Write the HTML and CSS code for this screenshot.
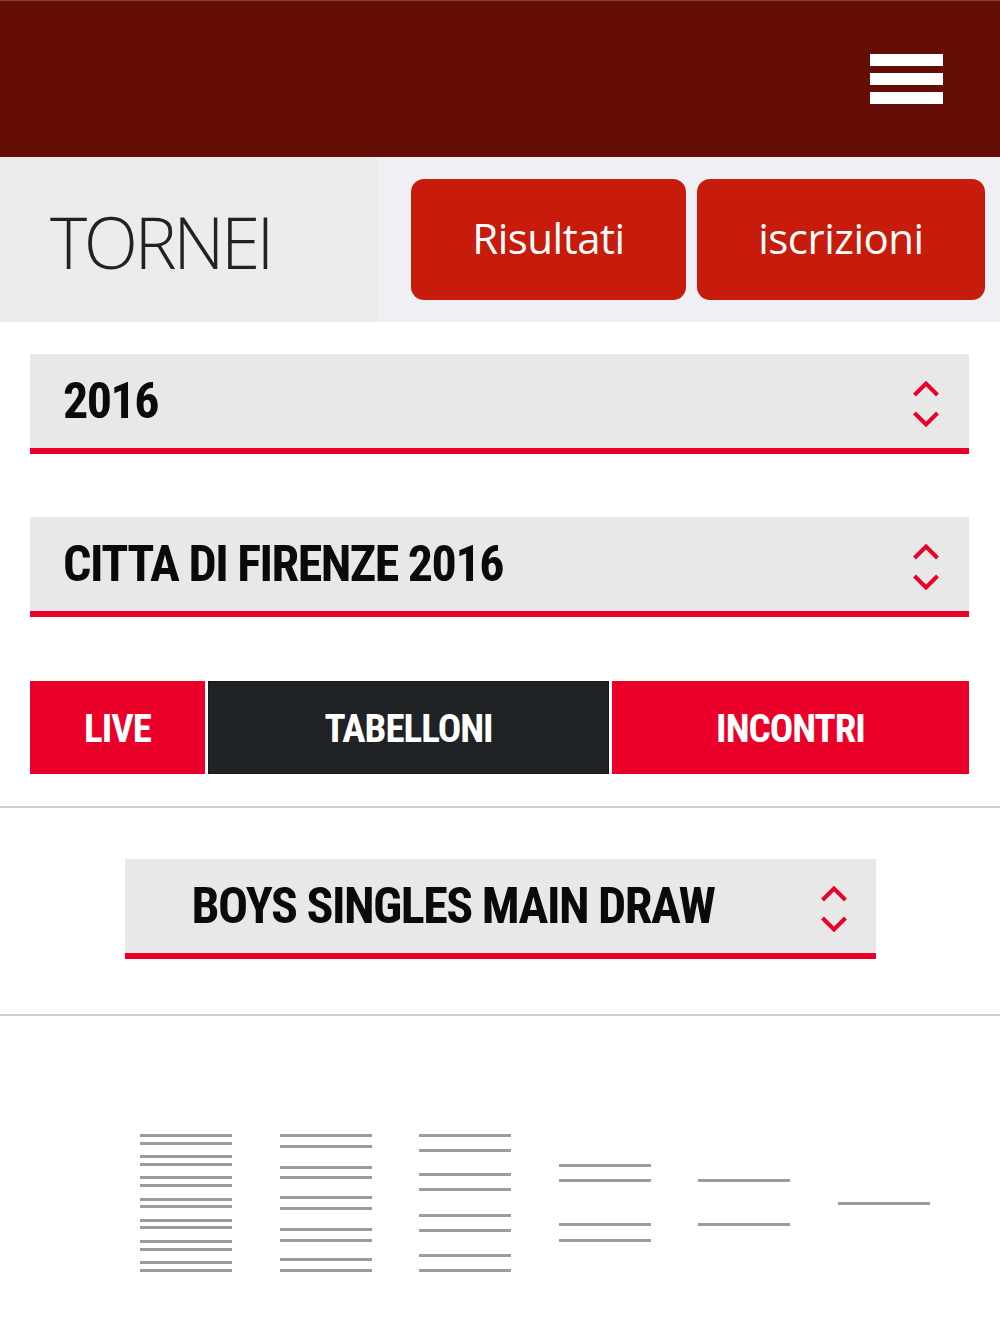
FILE: index.html
```html
<!DOCTYPE html>
<html lang="it">
  <head>
    <meta charset="UTF-8" />
    <meta name="viewport" content="width=device-width, initial-scale=1.0" />
    <title>Tornei</title>
    <link rel="stylesheet" href="styles.css">
  </head>
  <body>
    <header class="topbar">
      <button class="menu-btn" aria-label="Menu">
        <span></span>
        <span></span>
        <span></span>
      </button>
    </header>

    <section class="page-title">
      <div class="title-box">
        <h1>TORNEI</h1>
      </div>
      <div class="title-actions">
        <a href="#" class="action-btn">Risultati</a>
        <a href="#" class="action-btn">iscrizioni</a>
      </div>
    </section>

    <section class="filters">
      <div class="select">
        <span class="select-label">2016</span>
        <svg class="select-arrows" viewBox="0 0 28 48" width="28" height="48">
          <path d="M2.5 15 L14 3.5 L25.5 15" />
          <path d="M2.5 33 L14 44.5 L25.5 33" />
        </svg>
      </div>
      <div class="select">
        <span class="select-label">CITTA DI FIRENZE 2016</span>
        <svg class="select-arrows" viewBox="0 0 28 48" width="28" height="48">
          <path d="M2.5 15 L14 3.5 L25.5 15" />
          <path d="M2.5 33 L14 44.5 L25.5 33" />
        </svg>
      </div>
      <nav class="tabs">
        <a href="#" class="tab">LIVE</a>
        <a href="#" class="tab active">TABELLONI</a>
        <a href="#" class="tab">INCONTRI</a>
      </nav>
    </section>

    <section class="draw-picker">
      <div class="select select-draw">
        <span class="select-label">BOYS SINGLES MAIN DRAW</span>
        <svg class="select-arrows" viewBox="0 0 28 48" width="28" height="48">
          <path d="M2.5 15 L14 3.5 L25.5 15" />
          <path d="M2.5 33 L14 44.5 L25.5 33" />
        </svg>
      </div>
    </section>

    <section class="bracket" id="bracket"></section>

    <script>
      document.addEventListener("DOMContentLoaded", function () {
        // y offsets of the match lines for each round
        const rounds = [
          [0, 8, 21, 29, 42, 50, 64, 71, 85, 92, 106, 114, 127, 135],
          [0, 11, 32, 42, 62, 73, 94, 105, 124, 135],
          [0, 15, 39, 54, 80, 95, 120, 135],
          [30, 45, 89, 105],
          [45, 89],
          [68]
        ];
        const bracket = document.getElementById("bracket");

        rounds.forEach(function (lines) {
          const col = document.createElement("div");
          col.className = "round";
          lines.forEach(function (y) {
            const line = document.createElement("div");
            line.className = "round-line";
            line.style.top = y + "px";
            col.appendChild(line);
          });
          bracket.appendChild(col);
        });
      });
    </script>
  </body>
</html>
```

FILE: styles.css
```css
* {
  margin: 0;
  padding: 0;
  box-sizing: border-box;
}

body {
  font-family: "Open Sans", sans-serif;
  background: #ffffff;
  width: 1000px;
}

/* Header */
.topbar {
  height: 157px;
  background: #650e05;
  border-top: 1px solid #84433e;
  display: flex;
  justify-content: flex-end;
  align-items: center;
  padding-right: 57px;
}

.menu-btn {
  width: 73px;
  display: flex;
  flex-direction: column;
  gap: 7px;
  background: none;
  border: none;
  cursor: pointer;
}

.menu-btn span {
  display: block;
  height: 12px;
  background: #ffffff;
}

/* Title strip */
.page-title {
  display: flex;
  height: 165px;
  background: #f0f0f4;
}

.title-box {
  width: 378px;
  background: #ececec;
  display: flex;
  align-items: center;
  padding-left: 50px;
}

.title-box h1 {
  font-family: "Open Sans", sans-serif;
  font-weight: 300;
  font-size: 71px;
  letter-spacing: -3.5px;
  color: #222;
  line-height: 1;
  padding-top: 4px;
}

.title-actions {
  flex: 1;
  display: flex;
  gap: 11px;
  padding: 22px 15px 22px 33px;
}

.action-btn {
  flex: 1 1 auto;
  display: flex;
  justify-content: center;
  align-items: center;
  background: #c71b0b;
  border-radius: 13px;
  color: #ffffff;
  text-decoration: none;
  font-size: 42px;
  letter-spacing: -0.5px;
  padding-bottom: 4px;
}

/* Selects and tabs */
.filters {
  padding: 32px 31px 32px 30px;
  display: flex;
  flex-direction: column;
  gap: 63px;
}

.select {
  height: 100px;
  background: #e8e8e8;
  border-bottom: 6px solid #eb0029;
  display: flex;
  align-items: center;
  justify-content: space-between;
  padding: 0 29px 0 33px;
}

.select-label {
  font-family: "Roboto Condensed", "Roboto", sans-serif;
  font-weight: 700;
  font-size: 50px;
  letter-spacing: -1.5px;
  color: #0a0a0a;
  white-space: nowrap;
}

.select-arrows {
  fill: none;
  stroke: #eb0029;
  stroke-width: 4;
  margin-top: 6px;
}

.tabs {
  display: grid;
  grid-template-columns: 175px 401px 1fr;
  gap: 3px;
  height: 93px;
  margin-top: 1px;
}

.tab {
  display: flex;
  justify-content: center;
  align-items: center;
  background: #eb0029;
  color: #ffffff;
  text-decoration: none;
  font-family: "Roboto Condensed", "Roboto", sans-serif;
  font-weight: 700;
  font-size: 39px;
  letter-spacing: -1px;
  padding-top: 3px;
}

.tab.active {
  background: #202325;
  border: 1px solid #161819;
}

/* Draw picker */
.draw-picker {
  border-top: 2px solid #cfcfcf;
  border-bottom: 2px solid #cfcfcf;
  padding: 51px 0 55px;
  display: flex;
  justify-content: center;
}

.select-draw {
  width: 751px;
  padding: 0 28px 0 67px;
}

/* Bracket preview */
.bracket {
  display: flex;
  gap: 47.6px;
  padding: 118px 0 0 140px;
}

.round {
  position: relative;
  width: 92px;
  height: 140px;
}

.round-line {
  position: absolute;
  left: 0;
  right: 0;
  height: 3px;
  background: #9c9c9c;
}
```
